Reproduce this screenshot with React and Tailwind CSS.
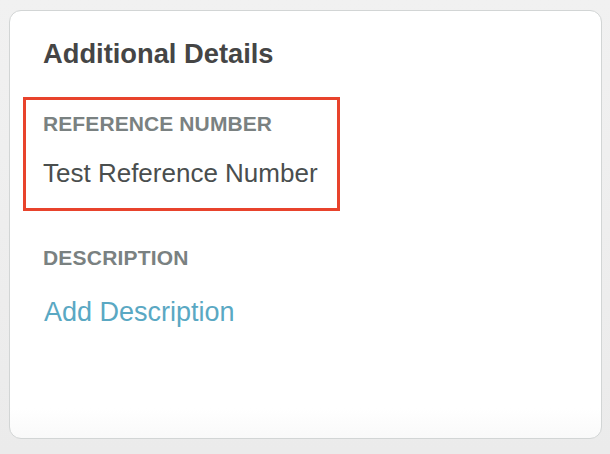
import React from 'react';

const font = { fontFamily: '"Liberation Sans", Arial, sans-serif' };

const App = () => {
  return (
    <div
      className="min-h-screen w-full bg-gradient-to-b from-[#f1f1f1] to-[#ebebeb] pt-[10px] pl-[9px]"
      style={font}
    >
      {/* Card */}
      <div className="w-[593px] h-[429px] rounded-[12px] border border-[#d2d5d5] bg-gradient-to-b from-white from-[93%] to-[#f9f9f9] px-[33px] pt-[26px]">
        <h2 className="text-[27.3px] leading-[34px] font-bold text-[#454545]">
          Additional Details
        </h2>

        {/* Highlighted field */}
        <div className="mt-[26px] -ml-[20px] w-[317px] border-[3px] border-[#e8432c] pl-[17px] pt-[12px] pb-[20px]">
          <div className="text-[21px] leading-[24px] font-bold text-[#7a8181] tracking-[0.1px]">
            REFERENCE NUMBER
          </div>
          <div className="mt-[22px] text-[26px] leading-[30px] text-[#4a4e4e]">
            Test Reference Number
          </div>
        </div>

        <div className="mt-[35px]">
          <div className="text-[21px] leading-[24px] font-bold text-[#7a8181] tracking-[0.2px]">
            DESCRIPTION
          </div>
          <button className="mt-[27px] block text-[27px] leading-[30px] text-[#5aa8c3] pl-[1px]">
            Add Description
          </button>
        </div>
      </div>
    </div>
  );
};

export default App;
